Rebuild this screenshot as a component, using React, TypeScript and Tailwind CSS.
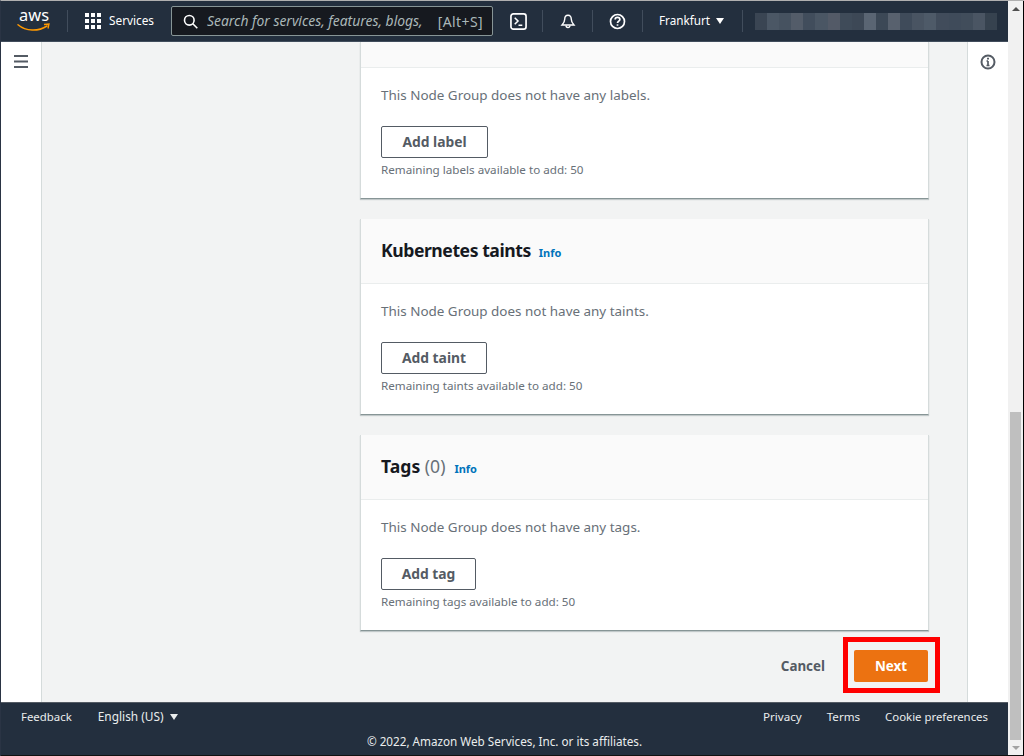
const font = { fontFamily: '"Noto Sans", "Open Sans", sans-serif' };

function Card({ title, count, noun, btn, btnW, clip, tight }: { title?: string; count?: string; noun: string; btn: string; btnW: string; clip?: boolean; tight?: boolean }) {
  return (
    <section className="bg-white border-x border-[#d5dbdb] border-b border-b-[#879596] shadow-[0_1px_1px_0_rgba(0,28,36,0.2)]">
      <div className={`bg-[#fafafa] border-b border-[#eaeded] ${clip ? "h-[26px]" : "h-[65px] flex items-center px-5 pb-[2px]"}`}>
        {!clip && (
          <>
            <h2 className={`text-[17.6px] font-bold text-[#16191f] leading-[22px] whitespace-nowrap ${tight ? "tracking-[-0.45px]" : ""}`}>
              {title}
              {count && <span className="font-normal text-[#687078]"> {count}</span>}
            </h2>
            <span className={`${tight ? "ml-2" : "ml-[9px]"} text-[11px] font-bold text-[#0073bb] mt-[7px]`}>Info</span>
          </>
        )}
      </div>
      <div className="px-5 pt-[17px] h-[130px]">
        <p className="text-[13.45px] leading-[20px] text-[#687078]">This Node Group does not have any {noun}s.</p>
        <button className={`mt-[21px] h-8 ${btnW} rounded-[2px] border border-[#545b64] bg-white text-[13.85px] font-bold text-[#545b64] flex items-center justify-center`}>
          {btn}
        </button>
        <p className="text-[11.65px] leading-[16px] mt-[4px] text-[#687078]">Remaining {noun}s available to add: 50</p>
      </div>
    </section>
  );
}

const bars = ["#3a4553","#4b5765","#465260","#535c69","#414d5c","#4a5664","#535a67","#3f4b59","#3d4856","#5a6573","#3c4856","#58616e","#3f4b5a","#495462","#4e5a68","#414c5b","#3f4b5a","#414d5b","#4a5563","#36424f"];

export default function App() {
  return (
    <div style={font} className="w-[1024px] h-[756px] overflow-hidden flex flex-col bg-[#232f3e] border-t border-t-[#b0b0b0] border-l border-l-[#2a3444]">
      <div className="flex-1 min-h-0 flex">
        <div className="flex-1 min-w-0 flex flex-col">
          <header className="h-10 shrink-0 bg-[#232f3e] flex items-center text-white border-b border-[#414d5c] box-content">
            <div className="w-[66px] h-10 shrink-0 flex items-center justify-center">
              <svg width="36" height="40" viewBox="0 -10 36 40">
                <path d="M2 13.700C10 20.500 22 20.800 31 15" fill="none" stroke="#ff9900" strokeWidth="1.500" strokeLinecap="round" />
                <path d="M28 13.500L33 13L32 17.500" fill="none" stroke="#ff9900" strokeWidth="1.300" />
                <text x="3" y="10" fill="#fff" fontSize="17" textLength="30" lengthAdjust="spacingAndGlyphs" fontFamily="Noto Sans, sans-serif">aws</text>
              </svg>
            </div>
            <div className="w-px h-[22px] bg-[#414d5c]" />
            <div className="ml-[17px] grid grid-cols-3 gap-[2px] w-[16px]">
              {Array.from({ length: 9 }).map((_, i) => (
                <span key={i} className="w-1 h-1 bg-white" />
              ))}
            </div>
            <span className="ml-[8px] text-[11.8px] text-white">Services</span>
            <div className="ml-[17px] w-[322px] h-[30px] rounded-[2px] bg-[#16191f] border border-[#879596] flex items-center pl-[11px] pr-[9px]">
              <svg width="15" height="15" viewBox="0 0 15 15" fill="none" stroke="#fff" strokeWidth="1.600" className="shrink-0">
                <circle cx="6.300" cy="6.300" r="4.800" />
                <path d="M9.800 9.800l4.500 4.500" />
              </svg>
              <span className="ml-[9px] text-[13.9px] italic text-[#aab7b8] whitespace-nowrap">Search for services, features, blogs,</span>
              <span className="ml-auto text-[14px] tracking-[0.4px] text-[#aab7b8] whitespace-nowrap">[Alt+S]</span>
            </div>
            <svg width="17" height="17" viewBox="0 0 18 18" className="ml-[17px] shrink-0" fill="none" stroke="#fff">
              <rect x="1" y="1" width="16" height="16" rx="2.500" strokeWidth="1.800" />
              <path d="M5 5l3.500 3.500L5 12M9 13h4" strokeWidth="1.600" />
            </svg>
            <div className="ml-[15px] w-px h-[22px] bg-[#414d5c]" />
            <svg width="16" height="17" viewBox="0 0 18 18" className="ml-[17px] shrink-0" fill="none" stroke="#fff" strokeWidth="1.600">
              <path d="M9 2c-2.500 0-3.700 2-3.700 4.500 0 2.500-.8 4-3 6.500h13.400c-2.200-2.500-3-4-3-6.500C12.700 4 11.500 2 9 2z" />
              <path d="M6.800 13.500a2.200 2.200 0 0 0 4.400 0" />
            </svg>
            <div className="ml-4 w-px h-[22px] bg-[#414d5c]" />
            <svg width="17" height="17" viewBox="0 0 18 18" className="ml-4 shrink-0" fill="none" stroke="#fff" strokeWidth="1.800">
              <circle cx="9" cy="9" r="7.400" />
              <path d="M6.500 7c0-1.500 1-2.400 2.500-2.400s2.500.9 2.500 2.200c0 1.800-2.500 2-2.500 3.900" />
              <path d="M9 12v1.500" />
            </svg>
            <div className="ml-4 w-px h-[22px] bg-[#414d5c]" />
            <span className="ml-4 text-[11.7px] text-white">Frankfurt</span>
            <span className="ml-[6px] w-0 h-0 border-x-[4px] border-x-transparent border-t-[6px] border-t-white" />
            <div className="ml-[18px] w-px h-[22px] bg-[#414d5c]" />
            <div className="ml-3 h-[17px] flex w-[242px] shrink-0">
              {bars.map((c, i) => (
                <span key={i} style={{ background: c }} className="flex-1" />
              ))}
            </div>
          </header>
          <div className="flex-1 min-h-0 flex bg-white">
            <div className="w-[41px] shrink-0 border-r border-[#d5dbdb] flex justify-center pt-[13px]">
              <svg width="14" height="13" viewBox="0 0 14 13" fill="#545b64">
                <rect width="14" height="2" y="0" />
                <rect width="14" height="2" y="5.500" />
                <rect width="14" height="2" y="11" />
              </svg>
            </div>
            <main className="w-[925px] shrink-0 bg-[#f2f3f3] pl-[318px] overflow-hidden">
              <div className="w-[569px]">
                <div className="flex flex-col gap-5">
                  <Card clip noun="label" btn="Add label" btnW="w-[107px]" />
                  <Card tight title="Kubernetes taints" noun="taint" btn="Add taint" btnW="w-[106px]" />
                  <Card title="Tags" count="(0)" noun="tag" btn="Add tag" btnW="w-[95px]" />
                </div>
                <div className="mt-[19px] pr-px flex items-center justify-end">
                  <span className="text-[13.4px] font-bold text-[#545b64] mr-[29px]">Cancel</span>
                  <div className="relative">
                    <button className="block w-[74px] h-8 rounded-[2px] bg-[#ec7211] text-white text-[13.4px] font-bold">Next</button>
                    <div className="absolute -left-[11px] -right-[12px] -top-[13px] -bottom-[11px] border-[5px] border-[#ff0000]" />
                  </div>
                </div>
              </div>
            </main>
            <div className="w-[41px] shrink-0 border-l border-[#d5dbdb] flex justify-center pt-[12px]">
              <svg width="16" height="16" viewBox="0 0 16 16" fill="none" stroke="#545b64" strokeWidth="2">
                <circle cx="8" cy="8" r="6.500" />
                <path d="M8 7v4.500M6.500 11.500h3M6.500 7H8" strokeWidth="1.700" />
                <path d="M8 3.800v1.700" />
              </svg>
            </div>
          </div>
          <footer className="h-[53px] shrink-0 bg-[#232f3e] border-t border-[#545b64] text-[11.6px] text-[#eaeded]">
            <div className="flex items-center h-[28px] px-5">
              <span className="text-[11.4px]">Feedback</span>
              <span className="ml-[26px] text-[11.9px]">English (US)</span>
              <span className="ml-[6px] w-0 h-0 border-x-[4.500px] border-x-transparent border-t-[6px] border-t-[#eaeded]" />
              <span className="ml-auto">Privacy</span>
              <span className="ml-[25px]">Terms</span>
              <span className="ml-[25px] text-[11.4px]">Cookie preferences</span>
            </div>
            <p className="text-center mt-[2px] leading-[16px] text-[11.7px]">© 2022, Amazon Web Services, Inc. or its affiliates.</p>
          </footer>
        </div>
        <aside className="w-[16px] shrink-0 bg-[#f1f1f1] border-r border-r-black flex flex-col items-center">
          <span className="mt-[6px] w-0 h-0 border-x-[4px] border-x-transparent border-b-[4px] border-b-[#505050]" />
          <div className="mt-[401px] w-[11px] h-[328px] bg-[#bfbfbf]" />
          <span className="mt-[6px] w-0 h-0 border-x-[4px] border-x-transparent border-t-[4px] border-t-[#a3a3a3]" />
        </aside>
      </div>
      <div className="h-px shrink-0 bg-[#111]" />
    </div>
  );
}
